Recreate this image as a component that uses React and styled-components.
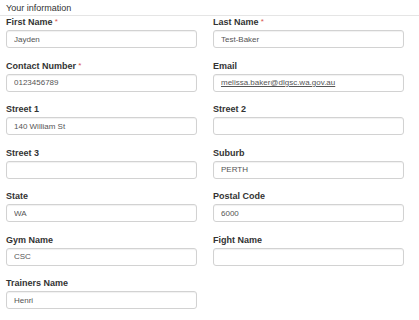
import React from "react";
import styled, { createGlobalStyle } from "styled-components";

const fields = [
  { label: "First Name", value: "Jayden", required: true },
  { label: "Last Name", value: "Test-Baker", required: true },
  { label: "Contact Number", value: "0123456789", required: true },
  { label: "Email", value: "melissa.baker@dlgsc.wa.gov.au", underline: true },
  { label: "Street 1", value: "140 William St" },
  { label: "Street 2", value: "" },
  { label: "Street 3", value: "" },
  { label: "Suburb", value: "PERTH" },
  { label: "State", value: "WA" },
  { label: "Postal Code", value: "6000" },
  { label: "Gym Name", value: "CSC" },
  { label: "Fight Name", value: "" },
  { label: "Trainers Name", value: "Henri" },
];

const GlobalStyle = createGlobalStyle`
  body {
    margin: 0;
    background: #fff;
    font-family: "Liberation Sans", Arial, sans-serif;
  }
`;

const App = () => {
  return (
    <Wrapper>
      <GlobalStyle />
      <Legend>Your information</Legend>
      <Grid>
        {fields.map((f) => (
          <Field key={f.label}>
            <Label>
              {f.label}
              {f.required && <Star> *</Star>}
            </Label>
            <Input defaultValue={f.value} $underline={f.underline} />
          </Field>
        ))}
      </Grid>
    </Wrapper>
  );
};

const Wrapper = styled.div`
  width: 419px;
`;

const Legend = styled.div`
  height: 16px;
  padding: 1px 0 0 6px;
  box-sizing: border-box;
  line-height: 15px;
  font-size: 9px;
  color: #333;
  border-bottom: 1px solid #e5e5e5;
`;

const Grid = styled.div`
  display: grid;
  grid-template-columns: 1fr 1fr;
  column-gap: 16px;
  row-gap: 11.5px;
  padding: 0 15px 0 6px;
`;

const Field = styled.div`
  display: flex;
  flex-direction: column;
  gap: 2px;
`;

const Label = styled.label`
  font-size: 9px;
  line-height: 12px;
  font-weight: bold;
  color: #333;
`;

const Star = styled.span`
  color: #d9534f;
  font-weight: normal;
  font-size: 8px;
  vertical-align: top;
`;

const Input = styled.input`
  box-sizing: border-box;
  height: 18px;
  width: 100%;
  margin: 0;
  padding: 0 7px;
  border: 1px solid #d2d2d2;
  border-radius: 3px;
  box-shadow: inset 0 1px 1px rgba(0, 0, 0, 0.06);
  font-family: "Liberation Sans", Arial, sans-serif;
  font-size: 8px;
  color: #555;
  background: #fff;
  outline: none;
  text-decoration: ${(p) => (p.$underline ? "underline" : "none")};
`;

export default App;
